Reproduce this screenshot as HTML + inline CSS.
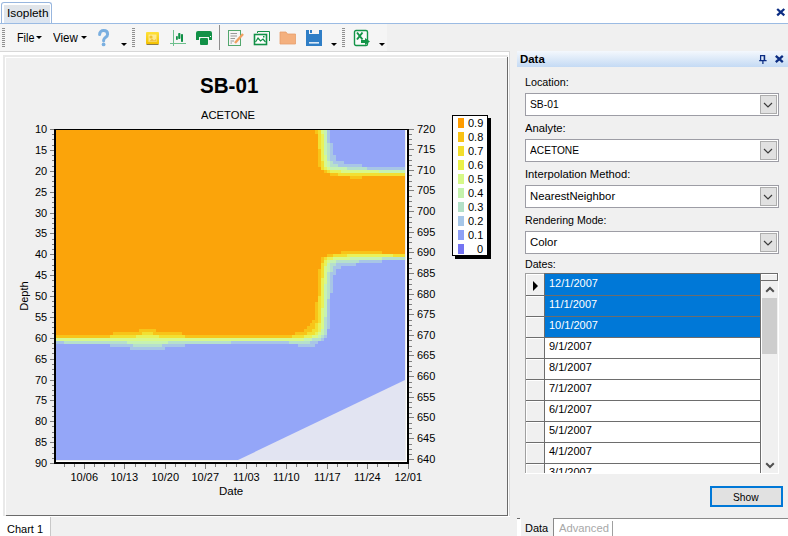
<!DOCTYPE html>
<html><head><meta charset="utf-8"><title>Isopleth</title>
<style>
*{margin:0;padding:0;box-sizing:border-box}
html,body{width:788px;height:536px;overflow:hidden}
body{position:relative;background:#f0f0f0;font-family:"Liberation Sans",sans-serif;font-size:11px;color:#000}
.a{position:absolute}
.t{position:absolute;white-space:nowrap}
svg{display:block}
</style></head><body>
<div class="a" style="left:0;top:0;width:788px;height:23px;background:#fff"></div>
<div class="a" style="left:1px;top:2px;width:51px;height:22px;border:1px solid #98b6de;border-bottom:none;border-radius:3px 3px 0 0;background:#fff"></div>
<div class="a" style="left:4px;top:5px;width:46px;height:18px;background:linear-gradient(#e2e5e9,#dde6f2)"></div>
<div class="a" style="left:0px;top:23px;width:788px;height:1px;background:#9bbbe3"></div>
<div class="t" style="left:7.00px;top:8px;font-size:11px;line-height:11px;color:#000;transform:scaleX(1.0769);transform-origin:0 0;">Isopleth</div>
<svg class="a" style="left:775px;top:7px" width="12" height="10" viewBox="0 0 12 10"><path d="M2.2 2 L9.3 8.3 M9.3 2 L2.2 8.3" stroke="#0c2d83" stroke-width="2.3" fill="none"/></svg>
<div class="a" style="left:0px;top:24px;width:387px;height:27px;background:#f5f5f5"></div>
<div class="a" style="left:0px;top:51px;width:510px;height:1px;background:#d7d7d7"></div>
<div class="a" style="left:2px;top:28px;width:3px;height:1px;background:#8f8f8f"></div>
<div class="a" style="left:2px;top:30px;width:3px;height:1px;background:#8f8f8f"></div>
<div class="a" style="left:2px;top:32px;width:3px;height:1px;background:#8f8f8f"></div>
<div class="a" style="left:2px;top:34px;width:3px;height:1px;background:#8f8f8f"></div>
<div class="a" style="left:2px;top:36px;width:3px;height:1px;background:#8f8f8f"></div>
<div class="a" style="left:2px;top:38px;width:3px;height:1px;background:#8f8f8f"></div>
<div class="a" style="left:2px;top:40px;width:3px;height:1px;background:#8f8f8f"></div>
<div class="a" style="left:2px;top:42px;width:3px;height:1px;background:#8f8f8f"></div>
<div class="a" style="left:2px;top:44px;width:3px;height:1px;background:#8f8f8f"></div>
<div class="a" style="left:2px;top:46px;width:3px;height:1px;background:#8f8f8f"></div>
<div class="t" style="left:17.00px;top:32px;font-size:12px;line-height:12px;color:#000;transform:scaleX(0.9000);transform-origin:0 0;">File</div>
<div class="a" style="left:36px;top:36px;width:0;height:0;border-left:3px solid transparent;border-right:3px solid transparent;border-top:3px solid #000"></div>
<div class="t" style="left:53.00px;top:32px;font-size:12px;line-height:12px;color:#000;transform:scaleX(0.9615);transform-origin:0 0;">View</div>
<div class="a" style="left:81px;top:36px;width:0;height:0;border-left:3px solid transparent;border-right:3px solid transparent;border-top:3px solid #000"></div>
<svg class="a" style="left:97px;top:29px" width="14" height="18" viewBox="0 0 14 18"><path d="M2.6 5.4 C2.6 3 4.4 1.6 6.6 1.6 C9 1.6 10.6 3 10.6 5.2 C10.6 7.6 8.4 8.2 7.3 9.6 C6.8 10.2 6.6 10.9 6.6 11.8" stroke="#7aafe0" stroke-width="3" fill="none" stroke-linecap="round"/><circle cx="6.6" cy="15.4" r="1.9" fill="#7aafe0"/></svg>
<div class="a" style="left:121px;top:43px;width:0;height:0;border-left:3px solid transparent;border-right:3px solid transparent;border-top:3px solid #000"></div>
<div class="a" style="left:132px;top:28px;width:3px;height:1px;background:#8f8f8f"></div>
<div class="a" style="left:132px;top:30px;width:3px;height:1px;background:#8f8f8f"></div>
<div class="a" style="left:132px;top:32px;width:3px;height:1px;background:#8f8f8f"></div>
<div class="a" style="left:132px;top:34px;width:3px;height:1px;background:#8f8f8f"></div>
<div class="a" style="left:132px;top:36px;width:3px;height:1px;background:#8f8f8f"></div>
<div class="a" style="left:132px;top:38px;width:3px;height:1px;background:#8f8f8f"></div>
<div class="a" style="left:132px;top:40px;width:3px;height:1px;background:#8f8f8f"></div>
<div class="a" style="left:132px;top:42px;width:3px;height:1px;background:#8f8f8f"></div>
<div class="a" style="left:132px;top:44px;width:3px;height:1px;background:#8f8f8f"></div>
<div class="a" style="left:132px;top:46px;width:3px;height:1px;background:#8f8f8f"></div>
<svg class="a" style="left:146px;top:32px" width="13" height="13" viewBox="0 0 13 13"><defs><linearGradient id="yg" x1="0" y1="0" x2="0" y2="1"><stop offset="0" stop-color="#ffe23a"/><stop offset="1" stop-color="#f3c000"/></linearGradient></defs><rect x="0" y="0" width="13" height="12.2" rx="1" fill="url(#yg)"/><rect x="0.5" y="12" width="12" height="1" fill="#8c7c4a"/><rect x="2.5" y="2.5" width="8" height="7.5" fill="#fff1b0" opacity="0.75"/><circle cx="5" cy="5" r="1.6" fill="#f2c230"/><path d="M3 9.5 L6 6.5 L8 8.5 L10 7 V9.5 Z" fill="#f0c040"/></svg>
<svg class="a" style="left:169px;top:29px" width="18" height="18" viewBox="0 0 18 18"><path d="M4.5 1 V17 M1 14.5 H17" stroke="#6cbf8c" stroke-width="1"/><rect x="7" y="7" width="1.8" height="4" rx="0.8" fill="#109046"/><rect x="9.2" y="4" width="2.2" height="6" rx="0.8" fill="#109046"/><rect x="12" y="5" width="2" height="8" rx="0.8" fill="#109046"/></svg>
<svg class="a" style="left:195px;top:30px" width="18" height="16" viewBox="0 0 18 16"><path d="M1 3 Q1 1 3 1 H15 Q17 1 17 3 V10 H14 V7 H4 V10 H1 Z" fill="#129147"/><rect x="5" y="8" width="8" height="7" rx="1" fill="#129147"/><rect x="15" y="6" width="1" height="1" fill="#fff"/></svg>
<div class="a" style="left:219px;top:25px;width:1px;height:25px;background:#8e8e8e"></div>
<svg class="a" style="left:227px;top:29px" width="18" height="18" viewBox="0 0 18 18"><rect x="1.5" y="1.5" width="12" height="15" fill="#f5f5f5" stroke="#53a76d" stroke-width="1"/><path d="M3.5 4.5 H10 M3.5 7 H10 M3.5 9.5 H8 M3.5 12 H7 M3.5 14 H5" stroke="#999" stroke-width="1"/><path d="M8 14 L16 5" stroke="#f0a060" stroke-width="2.4"/></svg>
<svg class="a" style="left:253px;top:30px" width="18" height="16" viewBox="0 0 18 16"><path d="M4.5 3 V1.5 H16.5 V11" stroke="#129147" stroke-width="1" fill="none"/><rect x="1.5" y="4.5" width="12" height="10" fill="#fff" stroke="#129147" stroke-width="1.6"/><path d="M2.5 12 L5 8 L7.5 11 L10 9 L12.5 12" stroke="#129147" stroke-width="1.2" fill="none"/><rect x="10" y="6" width="1.5" height="1.5" fill="#129147"/></svg>
<svg class="a" style="left:279px;top:31px" width="18" height="14" viewBox="0 0 18 14"><path d="M1 1 H7 L8.5 3 H16.5 V13 H1 Z" fill="#f4b07e" stroke="#e7a06c" stroke-width="0.8"/></svg>
<svg class="a" style="left:306px;top:30px" width="16" height="16" viewBox="0 0 16 16"><rect x="0" y="0" width="16" height="16" fill="#2f7ec6"/><rect x="3" y="0" width="10" height="4" fill="#f5f5f5"/><rect x="4" y="0" width="2" height="3" fill="#2f7ec6"/><rect x="3" y="12" width="10" height="1.6" fill="#dce9f6"/></svg>
<div class="a" style="left:331px;top:43px;width:0;height:0;border-left:3px solid transparent;border-right:3px solid transparent;border-top:3px solid #000"></div>
<div class="a" style="left:342px;top:28px;width:3px;height:1px;background:#8f8f8f"></div>
<div class="a" style="left:342px;top:30px;width:3px;height:1px;background:#8f8f8f"></div>
<div class="a" style="left:342px;top:32px;width:3px;height:1px;background:#8f8f8f"></div>
<div class="a" style="left:342px;top:34px;width:3px;height:1px;background:#8f8f8f"></div>
<div class="a" style="left:342px;top:36px;width:3px;height:1px;background:#8f8f8f"></div>
<div class="a" style="left:342px;top:38px;width:3px;height:1px;background:#8f8f8f"></div>
<div class="a" style="left:342px;top:40px;width:3px;height:1px;background:#8f8f8f"></div>
<div class="a" style="left:342px;top:42px;width:3px;height:1px;background:#8f8f8f"></div>
<div class="a" style="left:342px;top:44px;width:3px;height:1px;background:#8f8f8f"></div>
<div class="a" style="left:342px;top:46px;width:3px;height:1px;background:#8f8f8f"></div>
<svg class="a" style="left:353px;top:29px" width="18" height="18" viewBox="0 0 18 18"><rect x="1.5" y="1.5" width="13" height="15" rx="1.5" fill="#fafafa" stroke="#139447" stroke-width="1.4"/><path d="M4 3.5 L9.5 10.5 M9.5 3.5 L4 10.5" stroke="#139447" stroke-width="2"/><path d="M8 11 H12 V9 L17 12.5 L12 16 V14 H8 Z" fill="#139447"/></svg>
<div class="a" style="left:379px;top:43px;width:0;height:0;border-left:3px solid transparent;border-right:3px solid transparent;border-top:3px solid #000"></div>
<div class="a" style="left:0px;top:52px;width:509px;height:465px;background:#fff"></div>
<div class="a" style="left:509px;top:51px;width:1px;height:466px;background:#d9d9d9"></div>
<div class="a" style="left:3px;top:55px;width:505px;height:461px;background:#e9e9e9"></div>
<div class="a" style="left:5px;top:57px;width:502px;height:458px;background:#fff"></div>
<div class="a" style="left:6px;top:58px;width:501px;height:457px;background:#f0f0f0"></div>
<div class="a" style="left:6px;top:515px;width:502px;height:1px;background:#6a6a6a"></div>
<div class="a" style="left:507px;top:57px;width:1px;height:459px;background:#6a6a6a"></div>
<div class="a" style="left:0px;top:516px;width:510px;height:20px;background:#fff"></div>
<div class="a" style="left:51px;top:517px;width:459px;height:19px;background:#f0f0f0"></div>
<div class="a" style="left:50px;top:517px;width:1px;height:19px;background:#c8c8c8"></div>
<div class="t" style="left:7.00px;top:524px;font-size:11px;line-height:11px;color:#000;">Chart 1</div>
<div class="t" style="left:200.00px;top:75px;font-size:22px;line-height:22px;font-weight:bold;color:#000;transform:scaleX(0.9355);transform-origin:0 0;">SB-01</div>
<div class="t" style="left:201.00px;top:110px;font-size:11px;line-height:11px;color:#000;transform:scaleX(1.0189);transform-origin:0 0;">ACETONE</div>
<svg class="a" style="left:56px;top:130px" width="349" height="330" shape-rendering="crispEdges"><rect width="349" height="330" fill="#94a6f8"/><rect x="0" y="0" width="259" height="1" fill="#fba40a"/><rect x="259" y="0" width="3" height="1" fill="#f8c418"/><rect x="262" y="0" width="3" height="1" fill="#f2e032"/><rect x="265" y="0" width="3" height="1" fill="#d8f88a"/><rect x="268" y="0" width="3" height="1" fill="#c6f2b2"/><rect x="271" y="0" width="3" height="1" fill="#a8c6e6"/><rect x="0" y="1" width="259" height="3" fill="#fba40a"/><rect x="259" y="1" width="3" height="3" fill="#f8c418"/><rect x="262" y="1" width="3" height="3" fill="#f2e032"/><rect x="265" y="1" width="3" height="3" fill="#d8f88a"/><rect x="268" y="1" width="3" height="3" fill="#c6f2b2"/><rect x="271" y="1" width="3" height="3" fill="#a8c6e6"/><rect x="0" y="4" width="262" height="3" fill="#fba40a"/><rect x="262" y="4" width="3" height="3" fill="#f2e032"/><rect x="265" y="4" width="3" height="3" fill="#e8f25a"/><rect x="268" y="4" width="3" height="3" fill="#c6f2b2"/><rect x="271" y="4" width="3" height="3" fill="#a8c6e6"/><rect x="0" y="7" width="262" height="3" fill="#fba40a"/><rect x="262" y="7" width="3" height="3" fill="#f2e032"/><rect x="265" y="7" width="3" height="3" fill="#e8f25a"/><rect x="268" y="7" width="3" height="3" fill="#c6f2b2"/><rect x="271" y="7" width="3" height="3" fill="#a8c6e6"/><rect x="0" y="10" width="262" height="3" fill="#fba40a"/><rect x="262" y="10" width="3" height="3" fill="#f2e032"/><rect x="265" y="10" width="3" height="3" fill="#e8f25a"/><rect x="268" y="10" width="3" height="3" fill="#c6f2b2"/><rect x="271" y="10" width="3" height="3" fill="#a8c6e6"/><rect x="0" y="13" width="262" height="3" fill="#fba40a"/><rect x="262" y="13" width="3" height="3" fill="#f2e032"/><rect x="265" y="13" width="3" height="3" fill="#e8f25a"/><rect x="268" y="13" width="3" height="3" fill="#c6f2b2"/><rect x="271" y="13" width="3" height="3" fill="#b6e0cc"/><rect x="274" y="13" width="3" height="3" fill="#a8c6e6"/><rect x="0" y="16" width="262" height="3" fill="#fba40a"/><rect x="262" y="16" width="3" height="3" fill="#f2e032"/><rect x="265" y="16" width="3" height="3" fill="#e8f25a"/><rect x="268" y="16" width="3" height="3" fill="#c6f2b2"/><rect x="271" y="16" width="3" height="3" fill="#b6e0cc"/><rect x="274" y="16" width="3" height="3" fill="#a8c6e6"/><rect x="0" y="19" width="262" height="3" fill="#fba40a"/><rect x="262" y="19" width="3" height="3" fill="#f8c418"/><rect x="265" y="19" width="3" height="3" fill="#e8f25a"/><rect x="268" y="19" width="3" height="3" fill="#c6f2b2"/><rect x="271" y="19" width="3" height="3" fill="#b6e0cc"/><rect x="274" y="19" width="3" height="3" fill="#a8c6e6"/><rect x="0" y="22" width="262" height="3" fill="#fba40a"/><rect x="262" y="22" width="3" height="3" fill="#f8c418"/><rect x="265" y="22" width="3" height="3" fill="#e8f25a"/><rect x="268" y="22" width="3" height="3" fill="#c6f2b2"/><rect x="271" y="22" width="3" height="3" fill="#b6e0cc"/><rect x="274" y="22" width="3" height="3" fill="#a8c6e6"/><rect x="0" y="25" width="262" height="3" fill="#fba40a"/><rect x="262" y="25" width="3" height="3" fill="#f8c418"/><rect x="265" y="25" width="3" height="3" fill="#e8f25a"/><rect x="268" y="25" width="3" height="3" fill="#d8f88a"/><rect x="271" y="25" width="3" height="3" fill="#b6e0cc"/><rect x="274" y="25" width="6" height="3" fill="#a8c6e6"/><rect x="0" y="28" width="262" height="3" fill="#fba40a"/><rect x="262" y="28" width="3" height="3" fill="#f8c418"/><rect x="265" y="28" width="3" height="3" fill="#e8f25a"/><rect x="268" y="28" width="3" height="3" fill="#d8f88a"/><rect x="271" y="28" width="3" height="3" fill="#b6e0cc"/><rect x="274" y="28" width="6" height="3" fill="#a8c6e6"/><rect x="0" y="31" width="262" height="3" fill="#fba40a"/><rect x="262" y="31" width="3" height="3" fill="#f8c418"/><rect x="265" y="31" width="3" height="3" fill="#f2e032"/><rect x="268" y="31" width="3" height="3" fill="#d8f88a"/><rect x="271" y="31" width="3" height="3" fill="#c6f2b2"/><rect x="274" y="31" width="3" height="3" fill="#b6e0cc"/><rect x="277" y="31" width="11" height="3" fill="#a8c6e6"/><rect x="0" y="34" width="262" height="3" fill="#fba40a"/><rect x="262" y="34" width="3" height="3" fill="#f8c418"/><rect x="265" y="34" width="3" height="3" fill="#f2e032"/><rect x="268" y="34" width="3" height="3" fill="#d8f88a"/><rect x="271" y="34" width="3" height="3" fill="#c6f2b2"/><rect x="274" y="34" width="8" height="3" fill="#b6e0cc"/><rect x="282" y="34" width="24" height="3" fill="#a8c6e6"/><rect x="0" y="37" width="265" height="3" fill="#fba40a"/><rect x="265" y="37" width="3" height="3" fill="#f2e032"/><rect x="268" y="37" width="3" height="3" fill="#e8f25a"/><rect x="271" y="37" width="3" height="3" fill="#d8f88a"/><rect x="274" y="37" width="17" height="3" fill="#c6f2b2"/><rect x="291" y="37" width="20" height="3" fill="#b6e0cc"/><rect x="311" y="37" width="38" height="3" fill="#a8c6e6"/><rect x="0" y="40" width="268" height="3" fill="#fba40a"/><rect x="268" y="40" width="3" height="3" fill="#f8c418"/><rect x="271" y="40" width="3" height="3" fill="#f2e032"/><rect x="274" y="40" width="11" height="3" fill="#e8f25a"/><rect x="285" y="40" width="38" height="3" fill="#d8f88a"/><rect x="323" y="40" width="26" height="3" fill="#c6f2b2"/><rect x="0" y="43" width="274" height="3" fill="#fba40a"/><rect x="274" y="43" width="8" height="3" fill="#f8c418"/><rect x="282" y="43" width="67" height="3" fill="#f2e032"/><rect x="0" y="46" width="294" height="3" fill="#fba40a"/><rect x="294" y="46" width="12" height="3" fill="#f8c418"/><rect x="306" y="46" width="43" height="3" fill="#fba40a"/><rect x="0" y="49" width="349" height="3" fill="#fba40a"/><rect x="0" y="52" width="349" height="3" fill="#fba40a"/><rect x="0" y="55" width="349" height="3" fill="#fba40a"/><rect x="0" y="58" width="349" height="3" fill="#fba40a"/><rect x="0" y="61" width="349" height="3" fill="#fba40a"/><rect x="0" y="64" width="349" height="3" fill="#fba40a"/><rect x="0" y="67" width="349" height="3" fill="#fba40a"/><rect x="0" y="70" width="349" height="3" fill="#fba40a"/><rect x="0" y="73" width="349" height="3" fill="#fba40a"/><rect x="0" y="76" width="349" height="3" fill="#fba40a"/><rect x="0" y="79" width="349" height="3" fill="#fba40a"/><rect x="0" y="82" width="349" height="3" fill="#fba40a"/><rect x="0" y="85" width="349" height="3" fill="#fba40a"/><rect x="0" y="88" width="349" height="3" fill="#fba40a"/><rect x="0" y="91" width="349" height="3" fill="#fba40a"/><rect x="0" y="94" width="349" height="3" fill="#fba40a"/><rect x="0" y="97" width="349" height="3" fill="#fba40a"/><rect x="0" y="100" width="349" height="3" fill="#fba40a"/><rect x="0" y="103" width="349" height="3" fill="#fba40a"/><rect x="0" y="106" width="349" height="3" fill="#fba40a"/><rect x="0" y="109" width="349" height="3" fill="#fba40a"/><rect x="0" y="112" width="349" height="3" fill="#fba40a"/><rect x="0" y="115" width="349" height="3" fill="#fba40a"/><rect x="0" y="118" width="349" height="3" fill="#fba40a"/><rect x="0" y="121" width="285" height="3" fill="#fba40a"/><rect x="285" y="121" width="41" height="3" fill="#f8c418"/><rect x="326" y="121" width="23" height="3" fill="#fba40a"/><rect x="0" y="124" width="271" height="3" fill="#fba40a"/><rect x="271" y="124" width="6" height="3" fill="#f8c418"/><rect x="277" y="124" width="14" height="3" fill="#f2e032"/><rect x="291" y="124" width="46" height="3" fill="#e8f25a"/><rect x="337" y="124" width="12" height="3" fill="#f2e032"/><rect x="0" y="127" width="265" height="3" fill="#fba40a"/><rect x="265" y="127" width="3" height="3" fill="#f8c418"/><rect x="268" y="127" width="3" height="3" fill="#f2e032"/><rect x="271" y="127" width="6" height="3" fill="#e8f25a"/><rect x="277" y="127" width="17" height="3" fill="#d8f88a"/><rect x="294" y="127" width="32" height="3" fill="#c6f2b2"/><rect x="326" y="127" width="23" height="3" fill="#b6e0cc"/><rect x="0" y="130" width="265" height="3" fill="#fba40a"/><rect x="265" y="130" width="3" height="3" fill="#f8c418"/><rect x="268" y="130" width="3" height="3" fill="#e8f25a"/><rect x="271" y="130" width="3" height="3" fill="#d8f88a"/><rect x="274" y="130" width="6" height="3" fill="#c6f2b2"/><rect x="280" y="130" width="23" height="3" fill="#b6e0cc"/><rect x="303" y="130" width="23" height="3" fill="#a8c6e6"/><rect x="0" y="133" width="265" height="3" fill="#fba40a"/><rect x="265" y="133" width="3" height="3" fill="#f2e032"/><rect x="268" y="133" width="3" height="3" fill="#e8f25a"/><rect x="271" y="133" width="3" height="3" fill="#c6f2b2"/><rect x="274" y="133" width="6" height="3" fill="#b6e0cc"/><rect x="280" y="133" width="20" height="3" fill="#a8c6e6"/><rect x="0" y="136" width="265" height="3" fill="#fba40a"/><rect x="265" y="136" width="3" height="3" fill="#f2e032"/><rect x="268" y="136" width="3" height="3" fill="#d8f88a"/><rect x="271" y="136" width="3" height="3" fill="#c6f2b2"/><rect x="274" y="136" width="3" height="3" fill="#b6e0cc"/><rect x="277" y="136" width="8" height="3" fill="#a8c6e6"/><rect x="0" y="139" width="262" height="3" fill="#fba40a"/><rect x="262" y="139" width="3" height="3" fill="#f8c418"/><rect x="265" y="139" width="3" height="3" fill="#f2e032"/><rect x="268" y="139" width="3" height="3" fill="#d8f88a"/><rect x="271" y="139" width="3" height="3" fill="#c6f2b2"/><rect x="274" y="139" width="3" height="3" fill="#b6e0cc"/><rect x="277" y="139" width="3" height="3" fill="#a8c6e6"/><rect x="0" y="142" width="262" height="3" fill="#fba40a"/><rect x="262" y="142" width="3" height="3" fill="#f8c418"/><rect x="265" y="142" width="3" height="3" fill="#f2e032"/><rect x="268" y="142" width="3" height="3" fill="#d8f88a"/><rect x="271" y="142" width="3" height="3" fill="#b6e0cc"/><rect x="274" y="142" width="6" height="3" fill="#a8c6e6"/><rect x="0" y="145" width="262" height="3" fill="#fba40a"/><rect x="262" y="145" width="3" height="3" fill="#f8c418"/><rect x="265" y="145" width="3" height="3" fill="#f2e032"/><rect x="268" y="145" width="3" height="3" fill="#d8f88a"/><rect x="271" y="145" width="3" height="3" fill="#b6e0cc"/><rect x="274" y="145" width="3" height="3" fill="#a8c6e6"/><rect x="0" y="148" width="262" height="3" fill="#fba40a"/><rect x="262" y="148" width="3" height="3" fill="#f8c418"/><rect x="265" y="148" width="3" height="3" fill="#e8f25a"/><rect x="268" y="148" width="3" height="3" fill="#d8f88a"/><rect x="271" y="148" width="3" height="3" fill="#b6e0cc"/><rect x="274" y="148" width="3" height="3" fill="#a8c6e6"/><rect x="0" y="151" width="262" height="3" fill="#fba40a"/><rect x="262" y="151" width="3" height="3" fill="#f8c418"/><rect x="265" y="151" width="3" height="3" fill="#e8f25a"/><rect x="268" y="151" width="3" height="3" fill="#d8f88a"/><rect x="271" y="151" width="3" height="3" fill="#b6e0cc"/><rect x="274" y="151" width="3" height="3" fill="#a8c6e6"/><rect x="0" y="154" width="262" height="3" fill="#fba40a"/><rect x="262" y="154" width="3" height="3" fill="#f8c418"/><rect x="265" y="154" width="3" height="3" fill="#e8f25a"/><rect x="268" y="154" width="3" height="3" fill="#c6f2b2"/><rect x="271" y="154" width="3" height="3" fill="#b6e0cc"/><rect x="274" y="154" width="3" height="3" fill="#a8c6e6"/><rect x="0" y="157" width="262" height="3" fill="#fba40a"/><rect x="262" y="157" width="3" height="3" fill="#f8c418"/><rect x="265" y="157" width="3" height="3" fill="#e8f25a"/><rect x="268" y="157" width="3" height="3" fill="#c6f2b2"/><rect x="271" y="157" width="3" height="3" fill="#b6e0cc"/><rect x="274" y="157" width="3" height="3" fill="#a8c6e6"/><rect x="0" y="160" width="262" height="3" fill="#fba40a"/><rect x="262" y="160" width="3" height="3" fill="#f8c418"/><rect x="265" y="160" width="3" height="3" fill="#e8f25a"/><rect x="268" y="160" width="3" height="3" fill="#c6f2b2"/><rect x="271" y="160" width="3" height="3" fill="#b6e0cc"/><rect x="274" y="160" width="3" height="3" fill="#a8c6e6"/><rect x="0" y="163" width="262" height="3" fill="#fba40a"/><rect x="262" y="163" width="3" height="3" fill="#f8c418"/><rect x="265" y="163" width="3" height="3" fill="#e8f25a"/><rect x="268" y="163" width="3" height="3" fill="#c6f2b2"/><rect x="271" y="163" width="3" height="3" fill="#b6e0cc"/><rect x="0" y="166" width="262" height="3" fill="#fba40a"/><rect x="262" y="166" width="3" height="3" fill="#f2e032"/><rect x="265" y="166" width="3" height="3" fill="#e8f25a"/><rect x="268" y="166" width="3" height="3" fill="#c6f2b2"/><rect x="271" y="166" width="3" height="3" fill="#b6e0cc"/><rect x="0" y="169" width="262" height="3" fill="#fba40a"/><rect x="262" y="169" width="3" height="3" fill="#f2e032"/><rect x="265" y="169" width="3" height="3" fill="#e8f25a"/><rect x="268" y="169" width="3" height="3" fill="#c6f2b2"/><rect x="271" y="169" width="3" height="3" fill="#a8c6e6"/><rect x="0" y="172" width="259" height="3" fill="#fba40a"/><rect x="259" y="172" width="3" height="3" fill="#f8c418"/><rect x="262" y="172" width="3" height="3" fill="#f2e032"/><rect x="265" y="172" width="3" height="3" fill="#e8f25a"/><rect x="268" y="172" width="3" height="3" fill="#c6f2b2"/><rect x="271" y="172" width="3" height="3" fill="#a8c6e6"/><rect x="0" y="175" width="259" height="3" fill="#fba40a"/><rect x="259" y="175" width="3" height="3" fill="#f8c418"/><rect x="262" y="175" width="3" height="3" fill="#f2e032"/><rect x="265" y="175" width="3" height="3" fill="#e8f25a"/><rect x="268" y="175" width="3" height="3" fill="#c6f2b2"/><rect x="271" y="175" width="3" height="3" fill="#a8c6e6"/><rect x="0" y="178" width="259" height="3" fill="#fba40a"/><rect x="259" y="178" width="3" height="3" fill="#f8c418"/><rect x="262" y="178" width="3" height="3" fill="#f2e032"/><rect x="265" y="178" width="3" height="3" fill="#d8f88a"/><rect x="268" y="178" width="3" height="3" fill="#c6f2b2"/><rect x="271" y="178" width="3" height="3" fill="#a8c6e6"/><rect x="0" y="181" width="259" height="3" fill="#fba40a"/><rect x="259" y="181" width="3" height="3" fill="#f8c418"/><rect x="262" y="181" width="3" height="3" fill="#f2e032"/><rect x="265" y="181" width="3" height="3" fill="#d8f88a"/><rect x="268" y="181" width="3" height="3" fill="#c6f2b2"/><rect x="271" y="181" width="3" height="3" fill="#a8c6e6"/><rect x="0" y="184" width="259" height="3" fill="#fba40a"/><rect x="259" y="184" width="3" height="3" fill="#f8c418"/><rect x="262" y="184" width="3" height="3" fill="#f2e032"/><rect x="265" y="184" width="3" height="3" fill="#d8f88a"/><rect x="268" y="184" width="3" height="3" fill="#c6f2b2"/><rect x="271" y="184" width="3" height="3" fill="#a8c6e6"/><rect x="0" y="187" width="259" height="3" fill="#fba40a"/><rect x="259" y="187" width="3" height="3" fill="#f8c418"/><rect x="262" y="187" width="3" height="3" fill="#f2e032"/><rect x="265" y="187" width="3" height="3" fill="#d8f88a"/><rect x="268" y="187" width="3" height="3" fill="#b6e0cc"/><rect x="271" y="187" width="3" height="3" fill="#a8c6e6"/><rect x="0" y="190" width="256" height="3" fill="#fba40a"/><rect x="256" y="190" width="6" height="3" fill="#f8c418"/><rect x="262" y="190" width="3" height="3" fill="#f2e032"/><rect x="265" y="190" width="3" height="3" fill="#d8f88a"/><rect x="268" y="190" width="3" height="3" fill="#b6e0cc"/><rect x="271" y="190" width="3" height="3" fill="#a8c6e6"/><rect x="0" y="193" width="254" height="3" fill="#fba40a"/><rect x="254" y="193" width="5" height="3" fill="#f8c418"/><rect x="259" y="193" width="3" height="3" fill="#f2e032"/><rect x="262" y="193" width="3" height="3" fill="#e8f25a"/><rect x="265" y="193" width="3" height="3" fill="#d8f88a"/><rect x="268" y="193" width="3" height="3" fill="#b6e0cc"/><rect x="271" y="193" width="3" height="3" fill="#a8c6e6"/><rect x="0" y="196" width="251" height="3" fill="#fba40a"/><rect x="251" y="196" width="8" height="3" fill="#f8c418"/><rect x="259" y="196" width="3" height="3" fill="#f2e032"/><rect x="262" y="196" width="3" height="3" fill="#e8f25a"/><rect x="265" y="196" width="3" height="3" fill="#d8f88a"/><rect x="268" y="196" width="3" height="3" fill="#b6e0cc"/><rect x="271" y="196" width="3" height="3" fill="#a8c6e6"/><rect x="0" y="199" width="83" height="3" fill="#fba40a"/><rect x="83" y="199" width="17" height="3" fill="#f8c418"/><rect x="100" y="199" width="148" height="3" fill="#fba40a"/><rect x="248" y="199" width="8" height="3" fill="#f8c418"/><rect x="256" y="199" width="6" height="3" fill="#f2e032"/><rect x="262" y="199" width="3" height="3" fill="#e8f25a"/><rect x="265" y="199" width="3" height="3" fill="#c6f2b2"/><rect x="268" y="199" width="3" height="3" fill="#b6e0cc"/><rect x="0" y="202" width="57" height="3" fill="#fba40a"/><rect x="57" y="202" width="29" height="3" fill="#f8c418"/><rect x="86" y="202" width="11" height="3" fill="#f2e032"/><rect x="97" y="202" width="29" height="3" fill="#f8c418"/><rect x="126" y="202" width="113" height="3" fill="#fba40a"/><rect x="239" y="202" width="12" height="3" fill="#f8c418"/><rect x="251" y="202" width="8" height="3" fill="#f2e032"/><rect x="259" y="202" width="3" height="3" fill="#e8f25a"/><rect x="262" y="202" width="3" height="3" fill="#d8f88a"/><rect x="265" y="202" width="3" height="3" fill="#c6f2b2"/><rect x="268" y="202" width="3" height="3" fill="#b6e0cc"/><rect x="0" y="205" width="54" height="3" fill="#f8c418"/><rect x="54" y="205" width="26" height="3" fill="#f2e032"/><rect x="80" y="205" width="23" height="3" fill="#e8f25a"/><rect x="103" y="205" width="26" height="3" fill="#f2e032"/><rect x="129" y="205" width="107" height="3" fill="#f8c418"/><rect x="236" y="205" width="12" height="3" fill="#f2e032"/><rect x="248" y="205" width="8" height="3" fill="#e8f25a"/><rect x="256" y="205" width="6" height="3" fill="#d8f88a"/><rect x="262" y="205" width="3" height="3" fill="#c6f2b2"/><rect x="265" y="205" width="3" height="3" fill="#b6e0cc"/><rect x="268" y="205" width="3" height="3" fill="#a8c6e6"/><rect x="0" y="208" width="248" height="3" fill="#d8f88a"/><rect x="248" y="208" width="8" height="3" fill="#c6f2b2"/><rect x="256" y="208" width="9" height="3" fill="#b6e0cc"/><rect x="265" y="208" width="3" height="3" fill="#a8c6e6"/><rect x="0" y="211" width="8" height="3" fill="#a8c6e6"/><rect x="8" y="211" width="63" height="3" fill="#b6e0cc"/><rect x="71" y="211" width="41" height="3" fill="#c6f2b2"/><rect x="112" y="211" width="63" height="3" fill="#b6e0cc"/><rect x="175" y="211" width="58" height="3" fill="#a8c6e6"/><rect x="233" y="211" width="21" height="3" fill="#b6e0cc"/><rect x="254" y="211" width="8" height="3" fill="#a8c6e6"/><rect x="54" y="214" width="23" height="3" fill="#a8c6e6"/><rect x="77" y="214" width="29" height="3" fill="#b6e0cc"/><rect x="106" y="214" width="23" height="3" fill="#a8c6e6"/><rect x="242" y="214" width="17" height="3" fill="#a8c6e6"/><rect x="74" y="217" width="35" height="3" fill="#a8c6e6"/><path d="M182 330 L349 250 V330 Z" fill="#e2e4f2" shape-rendering="auto"/></svg>
<div class="a" style="left:405px;top:130px;width:1px;height:332px;background:#ececec"></div>
<div class="a" style="left:406px;top:129px;width:1px;height:333px;background:#fff"></div>
<div class="a" style="left:56px;top:460px;width:350px;height:1px;background:#ececec"></div>
<div class="a" style="left:56px;top:461px;width:351px;height:1px;background:#fff"></div>
<div class="a" style="left:54px;top:129px;width:355px;height:1px;background:#000"></div>
<div class="a" style="left:54px;top:129px;width:2px;height:335px;background:#000"></div>
<div class="a" style="left:407px;top:129px;width:2px;height:335px;background:#000"></div>
<div class="a" style="left:54px;top:462px;width:355px;height:2px;background:#000"></div>
<div class="a" style="left:50px;top:129px;width:4px;height:1px;background:#808080"></div>
<div class="t" style="left:35.00px;top:124px;font-size:11px;line-height:11px;color:#000;">10</div>
<div class="a" style="left:50px;top:150px;width:4px;height:1px;background:#808080"></div>
<div class="t" style="left:35.00px;top:145px;font-size:11px;line-height:11px;color:#000;">15</div>
<div class="a" style="left:50px;top:171px;width:4px;height:1px;background:#808080"></div>
<div class="t" style="left:35.00px;top:166px;font-size:11px;line-height:11px;color:#000;">20</div>
<div class="a" style="left:50px;top:192px;width:4px;height:1px;background:#808080"></div>
<div class="t" style="left:35.00px;top:187px;font-size:11px;line-height:11px;color:#000;">25</div>
<div class="a" style="left:50px;top:213px;width:4px;height:1px;background:#808080"></div>
<div class="t" style="left:35.00px;top:208px;font-size:11px;line-height:11px;color:#000;">30</div>
<div class="a" style="left:50px;top:233px;width:4px;height:1px;background:#808080"></div>
<div class="t" style="left:35.00px;top:228px;font-size:11px;line-height:11px;color:#000;">35</div>
<div class="a" style="left:50px;top:254px;width:4px;height:1px;background:#808080"></div>
<div class="t" style="left:35.00px;top:249px;font-size:11px;line-height:11px;color:#000;">40</div>
<div class="a" style="left:50px;top:275px;width:4px;height:1px;background:#808080"></div>
<div class="t" style="left:35.00px;top:270px;font-size:11px;line-height:11px;color:#000;">45</div>
<div class="a" style="left:50px;top:296px;width:4px;height:1px;background:#808080"></div>
<div class="t" style="left:35.00px;top:291px;font-size:11px;line-height:11px;color:#000;">50</div>
<div class="a" style="left:50px;top:317px;width:4px;height:1px;background:#808080"></div>
<div class="t" style="left:35.00px;top:312px;font-size:11px;line-height:11px;color:#000;">55</div>
<div class="a" style="left:50px;top:338px;width:4px;height:1px;background:#808080"></div>
<div class="t" style="left:35.00px;top:333px;font-size:11px;line-height:11px;color:#000;">60</div>
<div class="a" style="left:50px;top:359px;width:4px;height:1px;background:#808080"></div>
<div class="t" style="left:35.00px;top:354px;font-size:11px;line-height:11px;color:#000;">65</div>
<div class="a" style="left:50px;top:380px;width:4px;height:1px;background:#808080"></div>
<div class="t" style="left:35.00px;top:375px;font-size:11px;line-height:11px;color:#000;">70</div>
<div class="a" style="left:50px;top:400px;width:4px;height:1px;background:#808080"></div>
<div class="t" style="left:35.00px;top:395px;font-size:11px;line-height:11px;color:#000;">75</div>
<div class="a" style="left:50px;top:421px;width:4px;height:1px;background:#808080"></div>
<div class="t" style="left:35.00px;top:416px;font-size:11px;line-height:11px;color:#000;">80</div>
<div class="a" style="left:50px;top:442px;width:4px;height:1px;background:#808080"></div>
<div class="t" style="left:35.00px;top:437px;font-size:11px;line-height:11px;color:#000;">85</div>
<div class="a" style="left:50px;top:463px;width:4px;height:1px;background:#808080"></div>
<div class="t" style="left:35.00px;top:458px;font-size:11px;line-height:11px;color:#000;">90</div>
<div class="a" style="left:52px;top:134px;width:2px;height:1px;background:#808080"></div>
<div class="a" style="left:52px;top:139px;width:2px;height:1px;background:#808080"></div>
<div class="a" style="left:52px;top:145px;width:2px;height:1px;background:#808080"></div>
<div class="a" style="left:52px;top:155px;width:2px;height:1px;background:#808080"></div>
<div class="a" style="left:52px;top:160px;width:2px;height:1px;background:#808080"></div>
<div class="a" style="left:52px;top:166px;width:2px;height:1px;background:#808080"></div>
<div class="a" style="left:52px;top:176px;width:2px;height:1px;background:#808080"></div>
<div class="a" style="left:52px;top:181px;width:2px;height:1px;background:#808080"></div>
<div class="a" style="left:52px;top:186px;width:2px;height:1px;background:#808080"></div>
<div class="a" style="left:52px;top:197px;width:2px;height:1px;background:#808080"></div>
<div class="a" style="left:52px;top:202px;width:2px;height:1px;background:#808080"></div>
<div class="a" style="left:52px;top:207px;width:2px;height:1px;background:#808080"></div>
<div class="a" style="left:52px;top:218px;width:2px;height:1px;background:#808080"></div>
<div class="a" style="left:52px;top:223px;width:2px;height:1px;background:#808080"></div>
<div class="a" style="left:52px;top:228px;width:2px;height:1px;background:#808080"></div>
<div class="a" style="left:52px;top:239px;width:2px;height:1px;background:#808080"></div>
<div class="a" style="left:52px;top:244px;width:2px;height:1px;background:#808080"></div>
<div class="a" style="left:52px;top:249px;width:2px;height:1px;background:#808080"></div>
<div class="a" style="left:52px;top:259px;width:2px;height:1px;background:#808080"></div>
<div class="a" style="left:52px;top:265px;width:2px;height:1px;background:#808080"></div>
<div class="a" style="left:52px;top:270px;width:2px;height:1px;background:#808080"></div>
<div class="a" style="left:52px;top:280px;width:2px;height:1px;background:#808080"></div>
<div class="a" style="left:52px;top:286px;width:2px;height:1px;background:#808080"></div>
<div class="a" style="left:52px;top:291px;width:2px;height:1px;background:#808080"></div>
<div class="a" style="left:52px;top:301px;width:2px;height:1px;background:#808080"></div>
<div class="a" style="left:52px;top:306px;width:2px;height:1px;background:#808080"></div>
<div class="a" style="left:52px;top:312px;width:2px;height:1px;background:#808080"></div>
<div class="a" style="left:52px;top:322px;width:2px;height:1px;background:#808080"></div>
<div class="a" style="left:52px;top:327px;width:2px;height:1px;background:#808080"></div>
<div class="a" style="left:52px;top:333px;width:2px;height:1px;background:#808080"></div>
<div class="a" style="left:52px;top:343px;width:2px;height:1px;background:#808080"></div>
<div class="a" style="left:52px;top:348px;width:2px;height:1px;background:#808080"></div>
<div class="a" style="left:52px;top:353px;width:2px;height:1px;background:#808080"></div>
<div class="a" style="left:52px;top:364px;width:2px;height:1px;background:#808080"></div>
<div class="a" style="left:52px;top:369px;width:2px;height:1px;background:#808080"></div>
<div class="a" style="left:52px;top:374px;width:2px;height:1px;background:#808080"></div>
<div class="a" style="left:52px;top:385px;width:2px;height:1px;background:#808080"></div>
<div class="a" style="left:52px;top:390px;width:2px;height:1px;background:#808080"></div>
<div class="a" style="left:52px;top:395px;width:2px;height:1px;background:#808080"></div>
<div class="a" style="left:52px;top:406px;width:2px;height:1px;background:#808080"></div>
<div class="a" style="left:52px;top:411px;width:2px;height:1px;background:#808080"></div>
<div class="a" style="left:52px;top:416px;width:2px;height:1px;background:#808080"></div>
<div class="a" style="left:52px;top:426px;width:2px;height:1px;background:#808080"></div>
<div class="a" style="left:52px;top:432px;width:2px;height:1px;background:#808080"></div>
<div class="a" style="left:52px;top:437px;width:2px;height:1px;background:#808080"></div>
<div class="a" style="left:52px;top:447px;width:2px;height:1px;background:#808080"></div>
<div class="a" style="left:52px;top:453px;width:2px;height:1px;background:#808080"></div>
<div class="a" style="left:52px;top:458px;width:2px;height:1px;background:#808080"></div>
<div class="a" style="left:409px;top:129px;width:5px;height:1px;background:#808080"></div>
<div class="t" style="left:417.00px;top:124px;font-size:11px;line-height:11px;color:#000;">720</div>
<div class="a" style="left:409px;top:149px;width:5px;height:1px;background:#808080"></div>
<div class="t" style="left:417.00px;top:144px;font-size:11px;line-height:11px;color:#000;">715</div>
<div class="a" style="left:409px;top:170px;width:5px;height:1px;background:#808080"></div>
<div class="t" style="left:417.00px;top:165px;font-size:11px;line-height:11px;color:#000;">710</div>
<div class="a" style="left:409px;top:190px;width:5px;height:1px;background:#808080"></div>
<div class="t" style="left:417.00px;top:185px;font-size:11px;line-height:11px;color:#000;">705</div>
<div class="a" style="left:409px;top:211px;width:5px;height:1px;background:#808080"></div>
<div class="t" style="left:417.00px;top:206px;font-size:11px;line-height:11px;color:#000;">700</div>
<div class="a" style="left:409px;top:232px;width:5px;height:1px;background:#808080"></div>
<div class="t" style="left:417.00px;top:227px;font-size:11px;line-height:11px;color:#000;">695</div>
<div class="a" style="left:409px;top:252px;width:5px;height:1px;background:#808080"></div>
<div class="t" style="left:417.00px;top:247px;font-size:11px;line-height:11px;color:#000;">690</div>
<div class="a" style="left:409px;top:273px;width:5px;height:1px;background:#808080"></div>
<div class="t" style="left:417.00px;top:268px;font-size:11px;line-height:11px;color:#000;">685</div>
<div class="a" style="left:409px;top:294px;width:5px;height:1px;background:#808080"></div>
<div class="t" style="left:417.00px;top:289px;font-size:11px;line-height:11px;color:#000;">680</div>
<div class="a" style="left:409px;top:314px;width:5px;height:1px;background:#808080"></div>
<div class="t" style="left:417.00px;top:309px;font-size:11px;line-height:11px;color:#000;">675</div>
<div class="a" style="left:409px;top:335px;width:5px;height:1px;background:#808080"></div>
<div class="t" style="left:417.00px;top:330px;font-size:11px;line-height:11px;color:#000;">670</div>
<div class="a" style="left:409px;top:355px;width:5px;height:1px;background:#808080"></div>
<div class="t" style="left:417.00px;top:350px;font-size:11px;line-height:11px;color:#000;">665</div>
<div class="a" style="left:409px;top:376px;width:5px;height:1px;background:#808080"></div>
<div class="t" style="left:417.00px;top:371px;font-size:11px;line-height:11px;color:#000;">660</div>
<div class="a" style="left:409px;top:397px;width:5px;height:1px;background:#808080"></div>
<div class="t" style="left:417.00px;top:392px;font-size:11px;line-height:11px;color:#000;">655</div>
<div class="a" style="left:409px;top:417px;width:5px;height:1px;background:#808080"></div>
<div class="t" style="left:417.00px;top:412px;font-size:11px;line-height:11px;color:#000;">650</div>
<div class="a" style="left:409px;top:438px;width:5px;height:1px;background:#808080"></div>
<div class="t" style="left:417.00px;top:433px;font-size:11px;line-height:11px;color:#000;">645</div>
<div class="a" style="left:409px;top:459px;width:5px;height:1px;background:#808080"></div>
<div class="t" style="left:417.00px;top:454px;font-size:11px;line-height:11px;color:#000;">640</div>
<div class="a" style="left:409px;top:134px;width:3px;height:1px;background:#808080"></div>
<div class="a" style="left:409px;top:139px;width:3px;height:1px;background:#808080"></div>
<div class="a" style="left:409px;top:144px;width:3px;height:1px;background:#808080"></div>
<div class="a" style="left:409px;top:155px;width:3px;height:1px;background:#808080"></div>
<div class="a" style="left:409px;top:160px;width:3px;height:1px;background:#808080"></div>
<div class="a" style="left:409px;top:165px;width:3px;height:1px;background:#808080"></div>
<div class="a" style="left:409px;top:175px;width:3px;height:1px;background:#808080"></div>
<div class="a" style="left:409px;top:181px;width:3px;height:1px;background:#808080"></div>
<div class="a" style="left:409px;top:186px;width:3px;height:1px;background:#808080"></div>
<div class="a" style="left:409px;top:196px;width:3px;height:1px;background:#808080"></div>
<div class="a" style="left:409px;top:201px;width:3px;height:1px;background:#808080"></div>
<div class="a" style="left:409px;top:206px;width:3px;height:1px;background:#808080"></div>
<div class="a" style="left:409px;top:217px;width:3px;height:1px;background:#808080"></div>
<div class="a" style="left:409px;top:222px;width:3px;height:1px;background:#808080"></div>
<div class="a" style="left:409px;top:227px;width:3px;height:1px;background:#808080"></div>
<div class="a" style="left:409px;top:237px;width:3px;height:1px;background:#808080"></div>
<div class="a" style="left:409px;top:242px;width:3px;height:1px;background:#808080"></div>
<div class="a" style="left:409px;top:248px;width:3px;height:1px;background:#808080"></div>
<div class="a" style="left:409px;top:258px;width:3px;height:1px;background:#808080"></div>
<div class="a" style="left:409px;top:263px;width:3px;height:1px;background:#808080"></div>
<div class="a" style="left:409px;top:268px;width:3px;height:1px;background:#808080"></div>
<div class="a" style="left:409px;top:279px;width:3px;height:1px;background:#808080"></div>
<div class="a" style="left:409px;top:284px;width:3px;height:1px;background:#808080"></div>
<div class="a" style="left:409px;top:289px;width:3px;height:1px;background:#808080"></div>
<div class="a" style="left:409px;top:299px;width:3px;height:1px;background:#808080"></div>
<div class="a" style="left:409px;top:304px;width:3px;height:1px;background:#808080"></div>
<div class="a" style="left:409px;top:309px;width:3px;height:1px;background:#808080"></div>
<div class="a" style="left:409px;top:320px;width:3px;height:1px;background:#808080"></div>
<div class="a" style="left:409px;top:325px;width:3px;height:1px;background:#808080"></div>
<div class="a" style="left:409px;top:330px;width:3px;height:1px;background:#808080"></div>
<div class="a" style="left:409px;top:340px;width:3px;height:1px;background:#808080"></div>
<div class="a" style="left:409px;top:346px;width:3px;height:1px;background:#808080"></div>
<div class="a" style="left:409px;top:351px;width:3px;height:1px;background:#808080"></div>
<div class="a" style="left:409px;top:361px;width:3px;height:1px;background:#808080"></div>
<div class="a" style="left:409px;top:366px;width:3px;height:1px;background:#808080"></div>
<div class="a" style="left:409px;top:371px;width:3px;height:1px;background:#808080"></div>
<div class="a" style="left:409px;top:382px;width:3px;height:1px;background:#808080"></div>
<div class="a" style="left:409px;top:387px;width:3px;height:1px;background:#808080"></div>
<div class="a" style="left:409px;top:392px;width:3px;height:1px;background:#808080"></div>
<div class="a" style="left:409px;top:402px;width:3px;height:1px;background:#808080"></div>
<div class="a" style="left:409px;top:407px;width:3px;height:1px;background:#808080"></div>
<div class="a" style="left:409px;top:413px;width:3px;height:1px;background:#808080"></div>
<div class="a" style="left:409px;top:423px;width:3px;height:1px;background:#808080"></div>
<div class="a" style="left:409px;top:428px;width:3px;height:1px;background:#808080"></div>
<div class="a" style="left:409px;top:433px;width:3px;height:1px;background:#808080"></div>
<div class="a" style="left:409px;top:444px;width:3px;height:1px;background:#808080"></div>
<div class="a" style="left:409px;top:449px;width:3px;height:1px;background:#808080"></div>
<div class="a" style="left:409px;top:454px;width:3px;height:1px;background:#808080"></div>
<div class="a" style="left:84px;top:464px;width:1px;height:5px;background:#808080"></div>
<div class="t" style="left:70.50px;top:472px;font-size:11px;line-height:11px;color:#000;">10/06</div>
<div class="a" style="left:124px;top:464px;width:1px;height:5px;background:#808080"></div>
<div class="t" style="left:110.50px;top:472px;font-size:11px;line-height:11px;color:#000;">10/13</div>
<div class="a" style="left:165px;top:464px;width:1px;height:5px;background:#808080"></div>
<div class="t" style="left:151.50px;top:472px;font-size:11px;line-height:11px;color:#000;">10/20</div>
<div class="a" style="left:205px;top:464px;width:1px;height:5px;background:#808080"></div>
<div class="t" style="left:191.50px;top:472px;font-size:11px;line-height:11px;color:#000;">10/27</div>
<div class="a" style="left:246px;top:464px;width:1px;height:5px;background:#808080"></div>
<div class="t" style="left:233.00px;top:472px;font-size:11px;line-height:11px;color:#000;">11/03</div>
<div class="a" style="left:286px;top:464px;width:1px;height:5px;background:#808080"></div>
<div class="t" style="left:273.00px;top:472px;font-size:11px;line-height:11px;color:#000;">11/10</div>
<div class="a" style="left:327px;top:464px;width:1px;height:5px;background:#808080"></div>
<div class="t" style="left:314.00px;top:472px;font-size:11px;line-height:11px;color:#000;">11/17</div>
<div class="a" style="left:367px;top:464px;width:1px;height:5px;background:#808080"></div>
<div class="t" style="left:354.00px;top:472px;font-size:11px;line-height:11px;color:#000;">11/24</div>
<div class="a" style="left:408px;top:464px;width:1px;height:5px;background:#808080"></div>
<div class="t" style="left:394.50px;top:472px;font-size:11px;line-height:11px;color:#000;">12/01</div>
<div class="a" style="left:64px;top:464px;width:1px;height:3px;background:#808080"></div>
<div class="a" style="left:74px;top:464px;width:1px;height:3px;background:#808080"></div>
<div class="a" style="left:94px;top:464px;width:1px;height:3px;background:#808080"></div>
<div class="a" style="left:104px;top:464px;width:1px;height:3px;background:#808080"></div>
<div class="a" style="left:114px;top:464px;width:1px;height:3px;background:#808080"></div>
<div class="a" style="left:135px;top:464px;width:1px;height:3px;background:#808080"></div>
<div class="a" style="left:145px;top:464px;width:1px;height:3px;background:#808080"></div>
<div class="a" style="left:155px;top:464px;width:1px;height:3px;background:#808080"></div>
<div class="a" style="left:175px;top:464px;width:1px;height:3px;background:#808080"></div>
<div class="a" style="left:185px;top:464px;width:1px;height:3px;background:#808080"></div>
<div class="a" style="left:195px;top:464px;width:1px;height:3px;background:#808080"></div>
<div class="a" style="left:215px;top:464px;width:1px;height:3px;background:#808080"></div>
<div class="a" style="left:226px;top:464px;width:1px;height:3px;background:#808080"></div>
<div class="a" style="left:236px;top:464px;width:1px;height:3px;background:#808080"></div>
<div class="a" style="left:256px;top:464px;width:1px;height:3px;background:#808080"></div>
<div class="a" style="left:266px;top:464px;width:1px;height:3px;background:#808080"></div>
<div class="a" style="left:276px;top:464px;width:1px;height:3px;background:#808080"></div>
<div class="a" style="left:296px;top:464px;width:1px;height:3px;background:#808080"></div>
<div class="a" style="left:307px;top:464px;width:1px;height:3px;background:#808080"></div>
<div class="a" style="left:317px;top:464px;width:1px;height:3px;background:#808080"></div>
<div class="a" style="left:337px;top:464px;width:1px;height:3px;background:#808080"></div>
<div class="a" style="left:347px;top:464px;width:1px;height:3px;background:#808080"></div>
<div class="a" style="left:357px;top:464px;width:1px;height:3px;background:#808080"></div>
<div class="a" style="left:377px;top:464px;width:1px;height:3px;background:#808080"></div>
<div class="a" style="left:388px;top:464px;width:1px;height:3px;background:#808080"></div>
<div class="a" style="left:398px;top:464px;width:1px;height:3px;background:#808080"></div>
<div class="t" style="left:219.00px;top:486px;font-size:11px;line-height:11px;color:#000;transform:scaleX(1.0435);transform-origin:0 0;">Date</div>
<div class="t" style="left:10px;top:290px;width:30px;height:12px;font-size:11px;line-height:11px;text-align:center;transform:rotate(-90deg);transform-origin:15px 6px">Depth</div>
<div class="a" style="left:455px;top:118px;width:36px;height:141px;background:#000"></div>
<div class="a" style="left:452px;top:115px;width:36px;height:141px;background:#fff;border:1px solid #000"></div>
<div class="a" style="left:458px;top:118px;width:6px;height:10px;background:#ff9c00"></div>
<div class="t" style="left:468.00px;top:118px;font-size:11px;line-height:11px;color:#000;">0.9</div>
<div class="a" style="left:458px;top:132px;width:6px;height:10px;background:#f9c215"></div>
<div class="t" style="left:468.00px;top:132px;font-size:11px;line-height:11px;color:#000;">0.8</div>
<div class="a" style="left:458px;top:146px;width:6px;height:10px;background:#f2de2c"></div>
<div class="t" style="left:468.00px;top:146px;font-size:11px;line-height:11px;color:#000;">0.7</div>
<div class="a" style="left:458px;top:160px;width:6px;height:10px;background:#eaf048"></div>
<div class="t" style="left:468.00px;top:160px;font-size:11px;line-height:11px;color:#000;">0.6</div>
<div class="a" style="left:458px;top:174px;width:6px;height:10px;background:#d6f888"></div>
<div class="t" style="left:468.00px;top:174px;font-size:11px;line-height:11px;color:#000;">0.5</div>
<div class="a" style="left:458px;top:188px;width:6px;height:10px;background:#c4f2ac"></div>
<div class="t" style="left:468.00px;top:188px;font-size:11px;line-height:11px;color:#000;">0.4</div>
<div class="a" style="left:458px;top:202px;width:6px;height:10px;background:#b2e0c8"></div>
<div class="t" style="left:468.00px;top:202px;font-size:11px;line-height:11px;color:#000;">0.3</div>
<div class="a" style="left:458px;top:216px;width:6px;height:10px;background:#a6c6e8"></div>
<div class="t" style="left:468.00px;top:216px;font-size:11px;line-height:11px;color:#000;">0.2</div>
<div class="a" style="left:458px;top:230px;width:6px;height:10px;background:#8ea0f6"></div>
<div class="t" style="left:468.00px;top:230px;font-size:11px;line-height:11px;color:#000;">0.1</div>
<div class="a" style="left:458px;top:244px;width:6px;height:10px;background:#7474f2"></div>
<div class="t" style="left:477.00px;top:244px;font-size:11px;line-height:11px;color:#000;">0</div>
<div class="a" style="left:517px;top:51px;width:271px;height:16px;background:linear-gradient(#f4f8fd,#c4daf4)"></div>
<div class="t" style="left:520.00px;top:54px;font-size:11px;line-height:11px;font-weight:bold;color:#000;transform:scaleX(1.0400);transform-origin:0 0;">Data</div>
<svg class="a" style="left:758px;top:54px" width="10" height="11" viewBox="0 0 10 11"><path d="M2 1.6 H7 M2.6 1.2 V6.5 M6.4 1.2 V6.5 M1.2 6.6 H8.6 M4.9 6.6 V10" stroke="#0c2d83" stroke-width="1.25" fill="none"/><rect x="5.8" y="1" width="1.4" height="5.5" fill="#0c2d83"/></svg>
<svg class="a" style="left:774px;top:54px" width="11" height="10" viewBox="0 0 11 10"><path d="M1.8 1.8 L8.8 8.2 M8.8 1.8 L1.8 8.2" stroke="#0c2d83" stroke-width="2.3" fill="none"/></svg>
<div class="t" style="left:525.00px;top:77px;font-size:11px;line-height:11px;color:#000;transform:scaleX(0.9778);transform-origin:0 0;">Location:</div>
<div class="a" style="left:525px;top:93px;width:254px;height:23px;background:#fff;border:1px solid #9d9da5"></div>
<div class="a" style="left:760px;top:95px;width:17px;height:19px;background:#e1e1e1;border:1px solid #adadad"></div>
<svg class="a" style="left:763px;top:102px" width="11" height="7" viewBox="0 0 11 7"><path d="M1 1 L5 5 L9 1" stroke="#3c3c3c" stroke-width="1.15" fill="none"/></svg>
<div class="t" style="left:530.00px;top:99px;font-size:11px;line-height:11px;color:#000;transform:scaleX(0.9355);transform-origin:0 0;">SB-01</div>
<div class="t" style="left:525.00px;top:123px;font-size:11px;line-height:11px;color:#000;transform:scaleX(1.0250);transform-origin:0 0;">Analyte:</div>
<div class="a" style="left:525px;top:139px;width:254px;height:23px;background:#fff;border:1px solid #9d9da5"></div>
<div class="a" style="left:760px;top:141px;width:17px;height:19px;background:#e1e1e1;border:1px solid #adadad"></div>
<svg class="a" style="left:763px;top:148px" width="11" height="7" viewBox="0 0 11 7"><path d="M1 1 L5 5 L9 1" stroke="#3c3c3c" stroke-width="1.15" fill="none"/></svg>
<div class="t" style="left:530.00px;top:145px;font-size:11px;line-height:11px;color:#000;transform:scaleX(0.9245);transform-origin:0 0;">ACETONE</div>
<div class="t" style="left:525.00px;top:169px;font-size:11px;line-height:11px;color:#000;transform:scaleX(1.0194);transform-origin:0 0;">Interpolation Method:</div>
<div class="a" style="left:525px;top:185px;width:254px;height:23px;background:#fff;border:1px solid #9d9da5"></div>
<div class="a" style="left:760px;top:187px;width:17px;height:19px;background:#e1e1e1;border:1px solid #adadad"></div>
<svg class="a" style="left:763px;top:194px" width="11" height="7" viewBox="0 0 11 7"><path d="M1 1 L5 5 L9 1" stroke="#3c3c3c" stroke-width="1.15" fill="none"/></svg>
<div class="t" style="left:530.00px;top:191px;font-size:11px;line-height:11px;color:#000;transform:scaleX(1.0238);transform-origin:0 0;">NearestNeighbor</div>
<div class="t" style="left:525.00px;top:215px;font-size:11px;line-height:11px;color:#000;transform:scaleX(0.9643);transform-origin:0 0;">Rendering Mode:</div>
<div class="a" style="left:525px;top:231px;width:254px;height:23px;background:#fff;border:1px solid #9d9da5"></div>
<div class="a" style="left:760px;top:233px;width:17px;height:19px;background:#e1e1e1;border:1px solid #adadad"></div>
<svg class="a" style="left:763px;top:240px" width="11" height="7" viewBox="0 0 11 7"><path d="M1 1 L5 5 L9 1" stroke="#3c3c3c" stroke-width="1.15" fill="none"/></svg>
<div class="t" style="left:530.00px;top:237px;font-size:11px;line-height:11px;color:#000;transform:scaleX(1.0370);transform-origin:0 0;">Color</div>
<div class="t" style="left:525.00px;top:259px;font-size:11px;line-height:11px;color:#000;transform:scaleX(0.9688);transform-origin:0 0;">Dates:</div>
<div class="a" style="left:525px;top:273px;width:254px;height:201px;background:#fff"></div>
<div class="a" style="left:526px;top:274px;width:18px;height:21px;background:#fff"></div>
<div class="a" style="left:527px;top:275px;width:17px;height:20px;background:#f0f0f0"></div>
<div class="a" style="left:545px;top:274px;width:215px;height:21px;background:#0078d7"></div>
<div class="t" style="left:549.00px;top:278px;font-size:11px;line-height:11px;color:#fff;">12/1/2007</div>
<div class="a" style="left:526px;top:296px;width:18px;height:20px;background:#fff"></div>
<div class="a" style="left:527px;top:297px;width:17px;height:19px;background:#f0f0f0"></div>
<div class="a" style="left:545px;top:296px;width:215px;height:20px;background:#0078d7"></div>
<div class="t" style="left:549.00px;top:299px;font-size:11px;line-height:11px;color:#fff;">11/1/2007</div>
<div class="a" style="left:526px;top:317px;width:18px;height:20px;background:#fff"></div>
<div class="a" style="left:527px;top:318px;width:17px;height:19px;background:#f0f0f0"></div>
<div class="a" style="left:545px;top:317px;width:215px;height:20px;background:#0078d7"></div>
<div class="t" style="left:549.00px;top:320px;font-size:11px;line-height:11px;color:#fff;">10/1/2007</div>
<div class="a" style="left:526px;top:338px;width:18px;height:20px;background:#fff"></div>
<div class="a" style="left:527px;top:339px;width:17px;height:19px;background:#f0f0f0"></div>
<div class="a" style="left:545px;top:338px;width:215px;height:20px;background:#fff"></div>
<div class="t" style="left:549.00px;top:341px;font-size:11px;line-height:11px;color:#000;">9/1/2007</div>
<div class="a" style="left:526px;top:359px;width:18px;height:20px;background:#fff"></div>
<div class="a" style="left:527px;top:360px;width:17px;height:19px;background:#f0f0f0"></div>
<div class="a" style="left:545px;top:359px;width:215px;height:20px;background:#fff"></div>
<div class="t" style="left:549.00px;top:362px;font-size:11px;line-height:11px;color:#000;">8/1/2007</div>
<div class="a" style="left:526px;top:380px;width:18px;height:20px;background:#fff"></div>
<div class="a" style="left:527px;top:381px;width:17px;height:19px;background:#f0f0f0"></div>
<div class="a" style="left:545px;top:380px;width:215px;height:20px;background:#fff"></div>
<div class="t" style="left:549.00px;top:383px;font-size:11px;line-height:11px;color:#000;">7/1/2007</div>
<div class="a" style="left:526px;top:401px;width:18px;height:20px;background:#fff"></div>
<div class="a" style="left:527px;top:402px;width:17px;height:19px;background:#f0f0f0"></div>
<div class="a" style="left:545px;top:401px;width:215px;height:20px;background:#fff"></div>
<div class="t" style="left:549.00px;top:404px;font-size:11px;line-height:11px;color:#000;">6/1/2007</div>
<div class="a" style="left:526px;top:422px;width:18px;height:20px;background:#fff"></div>
<div class="a" style="left:527px;top:423px;width:17px;height:19px;background:#f0f0f0"></div>
<div class="a" style="left:545px;top:422px;width:215px;height:20px;background:#fff"></div>
<div class="t" style="left:549.00px;top:425px;font-size:11px;line-height:11px;color:#000;">5/1/2007</div>
<div class="a" style="left:526px;top:443px;width:18px;height:20px;background:#fff"></div>
<div class="a" style="left:527px;top:444px;width:17px;height:19px;background:#f0f0f0"></div>
<div class="a" style="left:545px;top:443px;width:215px;height:20px;background:#fff"></div>
<div class="t" style="left:549.00px;top:446px;font-size:11px;line-height:11px;color:#000;">4/1/2007</div>
<div class="a" style="left:526px;top:464px;width:18px;height:9px;background:#fff"></div>
<div class="a" style="left:527px;top:465px;width:17px;height:8px;background:#f0f0f0"></div>
<div class="a" style="left:545px;top:464px;width:215px;height:9px;background:#fff"></div>
<div class="t" style="left:549.00px;top:467px;font-size:11px;line-height:11px;color:#000;">3/1/2007</div>
<div class="a" style="left:525px;top:273px;width:19px;height:1px;background:#a0a0a0"></div>
<div class="a" style="left:544px;top:273px;width:217px;height:1px;background:#6d6d6d"></div>
<div class="a" style="left:525px;top:295px;width:236px;height:1px;background:#6d6d6d"></div>
<div class="a" style="left:525px;top:316px;width:236px;height:1px;background:#6d6d6d"></div>
<div class="a" style="left:525px;top:337px;width:236px;height:1px;background:#6d6d6d"></div>
<div class="a" style="left:525px;top:358px;width:236px;height:1px;background:#6d6d6d"></div>
<div class="a" style="left:525px;top:379px;width:236px;height:1px;background:#6d6d6d"></div>
<div class="a" style="left:525px;top:400px;width:236px;height:1px;background:#6d6d6d"></div>
<div class="a" style="left:525px;top:421px;width:236px;height:1px;background:#6d6d6d"></div>
<div class="a" style="left:525px;top:442px;width:236px;height:1px;background:#6d6d6d"></div>
<div class="a" style="left:525px;top:463px;width:236px;height:1px;background:#6d6d6d"></div>
<div class="a" style="left:525px;top:273px;width:1px;height:200px;background:#a0a0a0"></div>
<div class="a" style="left:544px;top:273px;width:1px;height:200px;background:#6d6d6d"></div>
<div class="a" style="left:760px;top:273px;width:1px;height:200px;background:#6d6d6d"></div>
<div class="a" style="left:525px;top:473px;width:254px;height:1px;background:#fff"></div>
<div class="a" style="left:517px;top:474px;width:271px;height:12px;background:#f0f0f0"></div>
<div class="a" style="left:533px;top:281px;width:0;height:0;border-top:5px solid transparent;border-bottom:5px solid transparent;border-left:5px solid #000"></div>
<div class="a" style="left:761px;top:273px;width:18px;height:200px;background:#fff"></div>
<div class="a" style="left:762px;top:281px;width:16px;height:192px;background:#f0f0f0"></div>
<div class="a" style="left:761px;top:273px;width:17px;height:8px;background:#6d6d6d"></div>
<div class="a" style="left:761px;top:274px;width:16px;height:6px;background:#fff"></div>
<div class="a" style="left:762px;top:275px;width:15px;height:5px;background:#f0f0f0"></div>
<svg class="a" style="left:765px;top:286px" width="10" height="7" viewBox="0 0 10 7"><path d="M1.2 5.8 L5 2 L8.8 5.8" stroke="#505050" stroke-width="2" fill="none"/></svg>
<div class="a" style="left:762px;top:298px;width:15px;height:56px;background:#cdcdcd"></div>
<svg class="a" style="left:765px;top:462px" width="10" height="7" viewBox="0 0 10 7"><path d="M1.2 1.2 L5 5 L8.8 1.2" stroke="#505050" stroke-width="2" fill="none"/></svg>
<div class="a" style="left:710px;top:486px;width:73px;height:21px;background:#e1e1e1;border:2px solid #0078d7"></div>
<div class="t" style="left:733.00px;top:492px;font-size:11px;line-height:11px;color:#000;transform:scaleX(0.9286);transform-origin:0 0;">Show</div>
<div class="a" style="left:517px;top:519px;width:4px;height:17px;background:#fff"></div>
<div class="a" style="left:517px;top:518px;width:3px;height:1px;background:#6a6a6a"></div>
<div class="a" style="left:553px;top:518px;width:235px;height:18px;background:#fff"></div>
<div class="a" style="left:553px;top:518px;width:1px;height:18px;background:#8a8a8a"></div>
<div class="a" style="left:554px;top:518px;width:234px;height:1px;background:#8a8a8a"></div>
<div class="a" style="left:612px;top:521px;width:1px;height:15px;background:#a0a0a0"></div>
<div class="t" style="left:525.00px;top:523px;font-size:11px;line-height:11px;color:#000;">Data</div>
<div class="t" style="left:559.00px;top:523px;font-size:11px;line-height:11px;color:#a8a8a8;transform:scaleX(1.0204);transform-origin:0 0;">Advanced</div>
</body></html>
